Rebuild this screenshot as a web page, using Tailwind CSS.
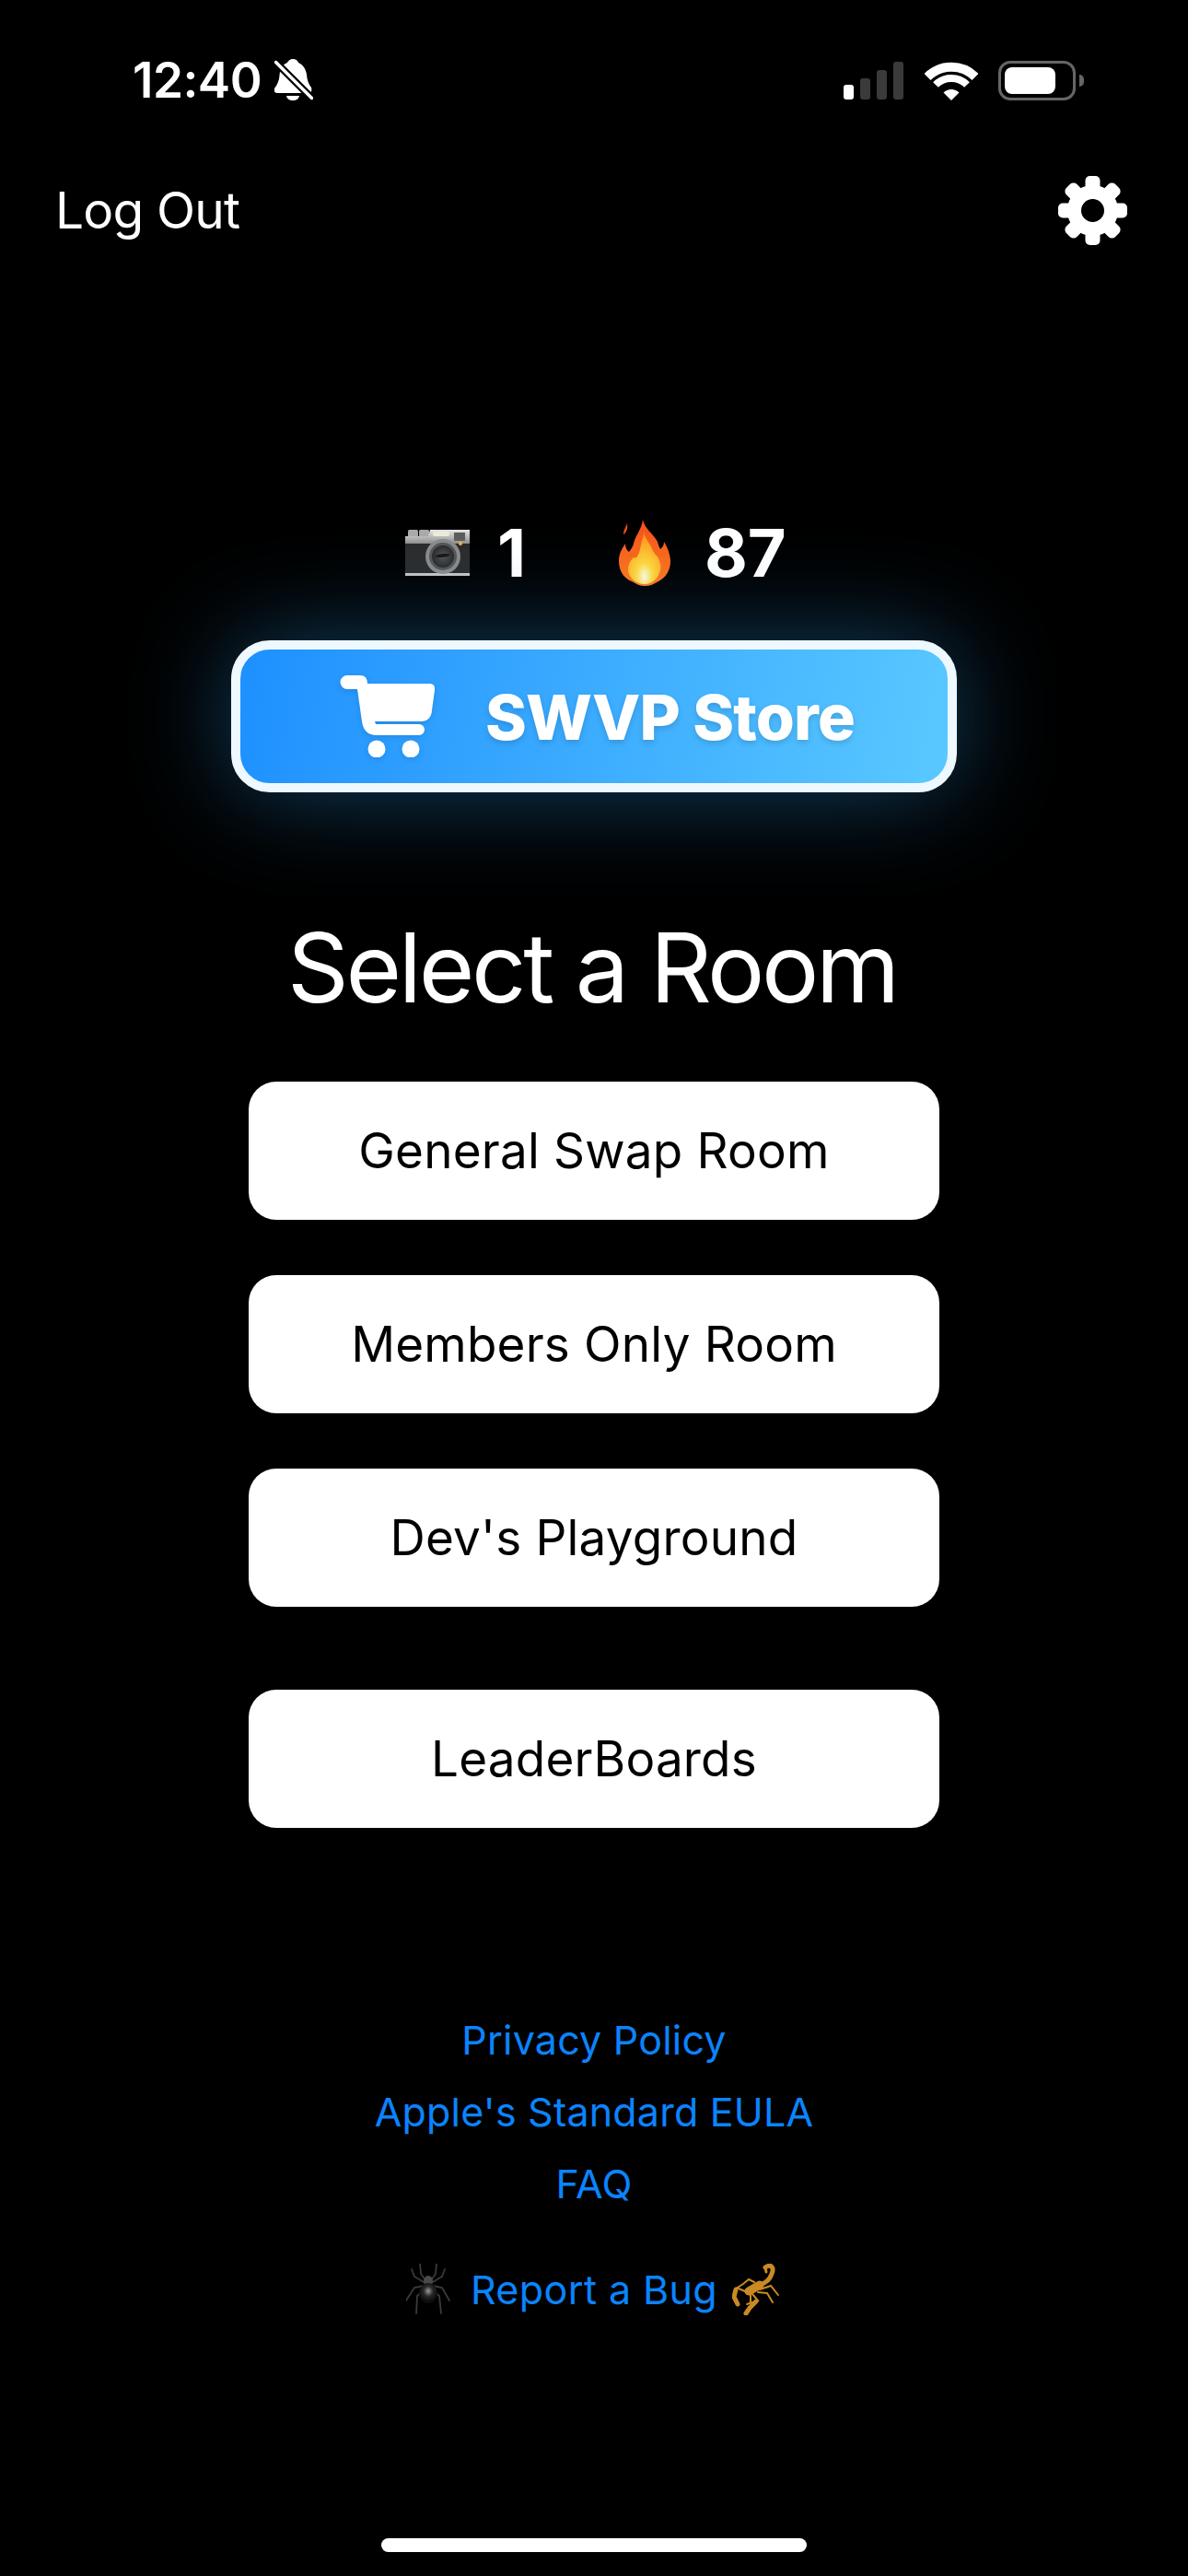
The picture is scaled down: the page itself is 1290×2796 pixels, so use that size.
<!DOCTYPE html>
<html lang="en">
<head>
<meta charset="utf-8">
<title>Select a Room</title>
<script src="https://cdn.jsdelivr.net/npm/@tailwindcss/browser@4"></script>
</head>
<body class="bg-black">
<div class="w-[1290px] h-[2796px] bg-black text-white flex flex-col font-['Inter','Liberation_Sans',sans-serif] overflow-hidden">

  <!-- status bar -->
  <div class="h-[174px] flex items-center justify-between pl-[144px] pr-[113px]">
    <div class="flex items-center gap-[14px]">
      <span class="text-[53px] leading-none font-semibold tracking-[-0.5px]">12:40</span>
      <svg class="w-[42px] h-[46px]" viewBox="0 0 42 46" fill="white">
        <path d="M20 0c3 0 5 1.500 6 4 5 2 8 7 9 13 .5 6 2 10 5 14 1 3 0 6-3 6H3c-3 0-4-3-3-5 3-4 5-8 5.500-14 .5-7 3-12 8.500-14 1-2 3-4 6-4z"/>
        <path d="M13 40h14c-.5 3-3 5-7 5s-6.500-2-7-5z"/>
        <path d="M1.500 3.500 40.500 42.500" stroke="black" stroke-width="8"/>
        <path d="M1.500 3.500 40.500 42.500" stroke="white" stroke-width="3.500" stroke-linecap="round"/>
      </svg>
    </div>
    <div class="flex items-center">
      <div class="flex items-end gap-[7px] h-[41px]">
        <div class="w-[11px] h-[16px] rounded-[3px] bg-white"></div>
        <div class="w-[11px] h-[23px] rounded-[3px] bg-[#3a3a3a]"></div>
        <div class="w-[11px] h-[32px] rounded-[3px] bg-[#3a3a3a]"></div>
        <div class="w-[11px] h-[41px] rounded-[3px] bg-[#3a3a3a]"></div>
      </div>
      <svg class="w-[58px] h-[43px] ml-[23px]" viewBox="0 0 58 43" fill="none" stroke="white">
        <path d="M3 17.500A37 37 0 0 1 55 17.500" stroke-width="10"/>
        <path d="M12 26A24 24 0 0 1 46 26" stroke-width="8"/>
        <path d="M20.500 34.500A12 12 0 0 1 37.500 34.500L29 43Z" fill="white" stroke="none"/>
      </svg>
      <div class="flex items-center ml-[22px]">
        <div class="w-[84px] h-[43px] rounded-[13px] border-[3px] border-[#666] flex items-center pl-[4px]">
          <div class="w-[55px] h-[29px] rounded-[8px] bg-white"></div>
        </div>
        <div class="w-[5px] h-[13px] ml-[4px] rounded-r-full bg-[#666]"></div>
      </div>
    </div>
  </div>

  <!-- header -->
  <div class="h-[108px] flex items-center justify-between pl-[60px] pr-[66px]">
    <span class="text-[55px] leading-none tracking-[-0.8px]">Log Out</span>
    <svg class="w-[75px] h-[75px]" viewBox="0 0 75 75" fill="white">
      <circle cx="37.500" cy="37.500" r="20" fill="none" stroke="white" stroke-width="15"/>
      <g>
        <rect x="29.500" y="0" width="16" height="17" rx="5"/>
        <rect x="29.500" y="0" width="16" height="17" rx="5" transform="rotate(45 37.500 37.500)"/>
        <rect x="29.500" y="0" width="16" height="17" rx="5" transform="rotate(90 37.500 37.500)"/>
        <rect x="29.500" y="0" width="16" height="17" rx="5" transform="rotate(135 37.500 37.500)"/>
        <rect x="29.500" y="0" width="16" height="17" rx="5" transform="rotate(180 37.500 37.500)"/>
        <rect x="29.500" y="0" width="16" height="17" rx="5" transform="rotate(225 37.500 37.500)"/>
        <rect x="29.500" y="0" width="16" height="17" rx="5" transform="rotate(270 37.500 37.500)"/>
        <rect x="29.500" y="0" width="16" height="17" rx="5" transform="rotate(315 37.500 37.500)"/>
      </g>
    </svg>
  </div>

  <!-- stats -->
  <div class="mt-[278px] h-[80px] flex items-center pl-[440px]">
    <svg class="w-[70px] h-[50px]" viewBox="0 0 70 50">
      <defs>
        <linearGradient id="camtop" x1="0" y1="0" x2="0" y2="1"><stop offset="0" stop-color="#e8e8e8"/><stop offset="1" stop-color="#8e8e8e"/></linearGradient>
        <radialGradient id="lens"><stop offset="0" stop-color="#555"/><stop offset="1" stop-color="#2a2a2a"/></radialGradient>
      </defs>
      <rect x="3" y="0" width="11" height="8" rx="1.500" fill="#aaa"/>
      <rect x="15" y="0" width="11" height="8" rx="1.500" fill="#aaa"/>
      <path d="M0 7h25l2-7h43v15H0z" fill="url(#camtop)"/>
      <rect x="30" y="2" width="18" height="5" rx="2" fill="#ececd8"/>
      <rect x="53" y="3" width="12" height="9" fill="#5d5d58"/>
      <rect x="0" y="15" width="70" height="33" fill="#2c2c2c"/>
      <rect x="0" y="47" width="70" height="3" fill="#c4c4c4"/>
      <circle cx="60" cy="15" r="2" fill="#f2b632"/>
      <circle cx="41" cy="29" r="19" fill="#8a8a8a"/>
      <circle cx="41" cy="29" r="15" fill="#555"/>
      <circle cx="41" cy="29" r="12" fill="url(#lens)"/>
      <path d="M32 29c4-3 12-4 17-2-3 3-12 4-17 2z" fill="#161616"/>
    </svg>
    <span class="ml-[30px] w-[132px] text-[72px] leading-none font-bold">1</span>
    <svg class="w-[56px] h-[72px]" viewBox="0 0 56 72">
      <defs>
        <linearGradient id="f1" x1="0" y1="0" x2="0" y2="1"><stop offset="0" stop-color="#f4511e"/><stop offset="1" stop-color="#ff7a1a"/></linearGradient>
        <radialGradient id="f2" cx="0.5" cy="0.85" r="0.75"><stop offset="0" stop-color="#fffbe0"/><stop offset="0.35" stop-color="#ffd83a"/><stop offset="1" stop-color="#ff9a1f"/></radialGradient>
      </defs>
      <path d="M26 0c2 10 11 15 16 24 1 4 2 6 3 8 3-2 4-5 4-8 5 8 7 16 7 21 0 10-5 18-13 22-5 3-9 5-15 5-5 0-9-2-14-5C8 65 0 58 0 45c0-9 4-14 7-19 0 4 1 7 4 9 2-3 4-5 5-9 2-9 9-16 10-26z" fill="url(#f1)"/>
      <path d="M9 4c-1 4 -4 7-4 12 3-2 5-6 4-12z" fill="#f4511e"/>
      <path d="M27 14c2 8 8 13 10 20 2 3 3 5 5 6 3 6 4 10 3 15-2 8-8 15-17 15-10 0-17-7-18-15 0-6 2-10 6-14 2 1 3 1 5-3 2-4 2-6 3-11 1-5 3-8 3-13z" fill="url(#f2)"/>
    </svg>
    <span class="ml-[37px] text-[72px] leading-none font-bold">87</span>
  </div>

  <!-- store button -->
  <div class="mt-[55px] mx-auto w-[788px] h-[165px] rounded-[42px] border-[10px] border-[#eef8ff] bg-linear-[100deg] from-[#1e90ff] to-[#5ac8ff] shadow-[0_0_110px_rgba(50,170,255,0.38)] flex items-center pl-[108px] box-border">
    <svg class="w-[103px] h-[89px] shrink-0 drop-shadow-[0_2px_3px_rgba(0,0,0,0.12)]" viewBox="0 0 103 89" fill="white">
      <path d="M8 0H22Q30 0 30 9H97Q104 9 103 16L100 38Q99 50 88 50L38 50 39 53H86a6 6 0 0 1 0 12H40Q26 65 24 50L19 15H8a7.500 7.500 0 0 1 0-15Z"/>
      <ellipse cx="40" cy="80" rx="9.500" ry="9.500"/>
      <ellipse cx="77" cy="80" rx="9.500" ry="9.500"/>
    </svg>
    <span class="ml-[55px] text-[68px] leading-none font-extrabold tracking-[-0.8px] [text-shadow:0_3px_6px_rgba(0,0,0,0.15)]">SWVP Store</span>
  </div>

  <!-- title -->
  <h1 class="mt-[130px] h-[120px] flex items-center justify-center pr-[4px] text-[104px] leading-none font-normal tracking-[-3.3px]">Select a Room</h1>

  <!-- rooms -->
  <div class="mt-[64px] flex flex-col items-center gap-[60px] text-black text-[53px] leading-none tracking-[0.2px]">
    <div class="w-[750px] h-[150px] rounded-[30px] bg-white flex items-center justify-center">General Swap Room</div>
    <div class="w-[750px] h-[150px] rounded-[30px] bg-white flex items-center justify-center">Members Only Room</div>
    <div class="w-[750px] h-[150px] rounded-[30px] bg-white flex items-center justify-center">Dev's Playground</div>
  </div>
  <div class="mt-[90px] mx-auto w-[750px] h-[150px] rounded-[30px] bg-white text-black text-[53px] leading-none tracking-[0.2px] flex items-center justify-center">LeaderBoards</div>

  <!-- links -->
  <div class="mt-[191px] flex flex-col items-center text-[#0a84ff] text-[43px] tracking-[0.2px]">
    <div class="h-[78px] flex items-center">Privacy Policy</div>
    <div class="h-[78px] flex items-center">Apple's Standard EULA</div>
    <div class="h-[78px] flex items-center">FAQ</div>
  </div>

  <div class="mt-[37px] h-[78px] flex items-center justify-center text-[#0a84ff] text-[43px] tracking-[0.4px]">
    <svg class="w-[48px] h-[56px]" viewBox="0 0 48 56" fill="none" stroke="#3a3a3a" stroke-width="1.800" stroke-linecap="round">
      <defs><radialGradient id="sp" cx="0.5" cy="0.4"><stop offset="0" stop-color="#9a9a9a"/><stop offset="0.5" stop-color="#2a2a2a"/><stop offset="1" stop-color="#0c0c0c"/></radialGradient></defs>
      <path d="M21 18 16 11 15 0M27 18 32 11 33 0M19 20 9 14 6 6M29 20 39 14 42 6M19 24 9 26 0 40M29 24 39 26 47 40M20 28 12 35 11 54M28 28 36 35 38 54"/>
      <ellipse cx="24" cy="19" rx="5" ry="6" fill="#4a4a4a" stroke="none"/>
      <ellipse cx="24" cy="32" rx="10" ry="11" fill="url(#sp)" stroke="none"/>
    </svg>
    <span class="ml-[22px] mr-[16px]">Report a Bug</span>
    <svg class="w-[54px] h-[56px]" viewBox="0 0 54 56" fill="none" stroke="#c98a24" stroke-linecap="round">
      <path d="M36 4C42 0 46 4 43 11 41 17 37 21 30 23" stroke-width="5"/>
      <path d="M30 23 18 30" stroke-width="9"/>
      <path d="M36 4 37 9" stroke-width="3"/>
      <path d="M24 20 18 17 12 22 4 27M14 30 7 27M30 28 42 24 50 34M28 31 38 32 44 42M22 33 28 40 16 44M20 34 20 42" stroke-width="2"/>
      <path d="M4 28 2 36 6 44" stroke-width="5"/>
      <path d="M26 41 19 48 15 54" stroke-width="5"/>
    </svg>
  </div>

  <!-- home indicator -->
  <div class="mt-[231px] mx-auto w-[462px] h-[15px] rounded-[8px] bg-white"></div>
</div>
</body>
</html>
